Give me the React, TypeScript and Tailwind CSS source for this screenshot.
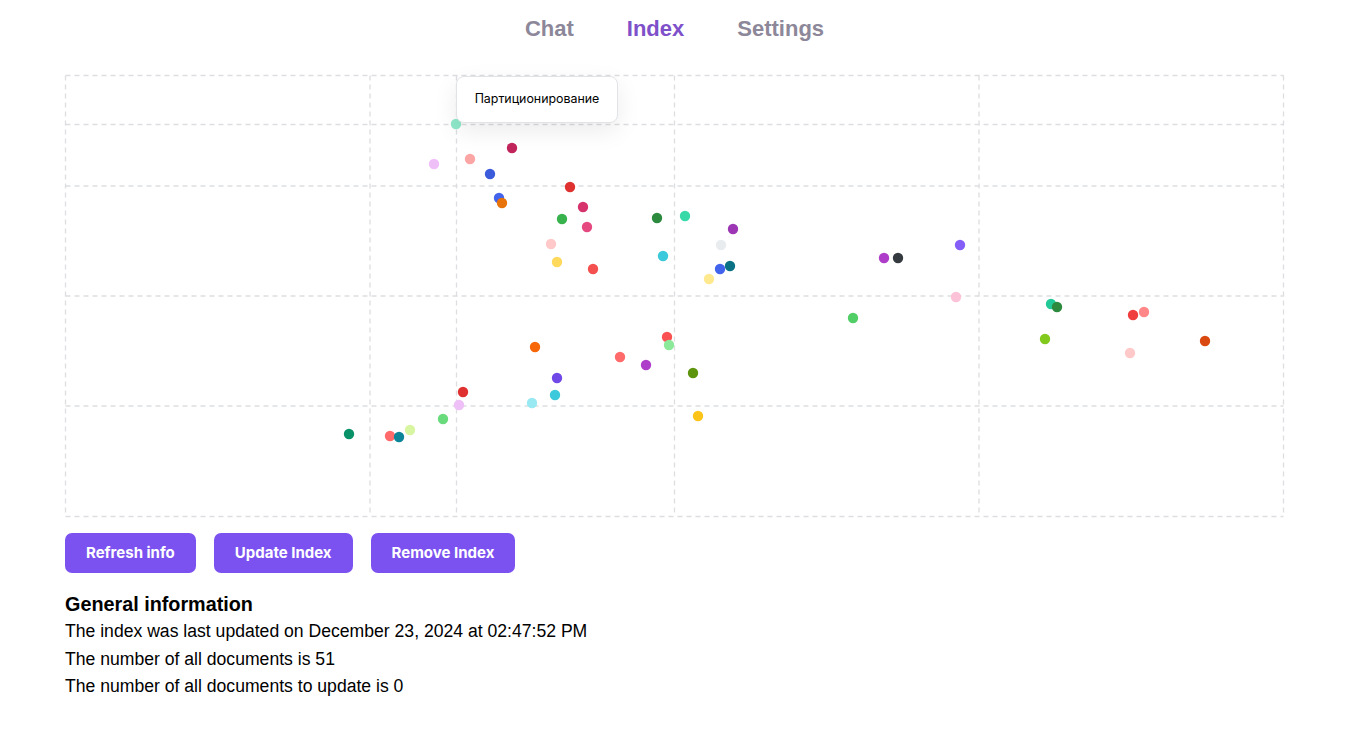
const points: [number, number, string][] = [
  [456, 123, '#8fe8c9'],
  [434, 163, '#efbff7'],
  [470, 158, '#fca5a5'],
  [512, 147, '#c2255c'],
  [490, 173, '#3b5bdb'],
  [499, 197, '#4263eb'],
  [502, 202, '#e8730a'],
  [570, 186, '#e03131'],
  [583, 206, '#d6336c'],
  [562, 218, '#37b24d'],
  [587, 226, '#e64980'],
  [551, 243, '#ffc9c9'],
  [557, 261, '#ffd95c'],
  [593, 268, '#f55050'],
  [657, 217, '#2b8a3e'],
  [685, 215, '#38d9a9'],
  [733, 228, '#9c36b5'],
  [721, 244, '#e9ecef'],
  [663, 255, '#3bc9db'],
  [720, 268, '#4263eb'],
  [730, 265, '#0b7285'],
  [709, 278, '#ffe98f'],
  [884, 257, '#ae3ec9'],
  [898, 257, '#343a40'],
  [960, 244, '#845ef7'],
  [956, 296, '#fcc2d7'],
  [853, 317, '#51cf66'],
  [1051, 303, '#20c997'],
  [1057, 306, '#2b8a3e'],
  [1133, 314, '#f03e3e'],
  [1144, 311, '#ff8787'],
  [1045, 338, '#82c91e'],
  [1130, 352, '#ffc9c9'],
  [1205, 340, '#d9480f'],
  [667, 336, '#fa5252'],
  [669, 344, '#8ce99a'],
  [535, 346, '#f76707'],
  [620, 356, '#ff6b6b'],
  [646, 364, '#ae3ec9'],
  [693, 372, '#5c940d'],
  [557, 377, '#7048e8'],
  [555, 394, '#3bc9db'],
  [532, 402, '#99e9f2'],
  [463, 391, '#e03131'],
  [459, 404, '#efbff7'],
  [443, 418, '#69db7c'],
  [698, 415, '#fcc419'],
  [349, 433, '#099268'],
  [390, 435, '#ff6b6b'],
  [399, 436, '#0c8599'],
  [410, 429, '#d8f5a2'],
];

const vLines = [65.5, 370, 674.5, 979, 1283.5];
const hLines = [74.5, 185, 295, 405, 515.5];

function Scatter() {
  return (
    <div className="relative w-[1221px] h-[444px]">
      <svg width="1221" height="444" viewBox="64 73 1221 444" className="block">
        <g stroke="#dddee1" strokeWidth="1.3" strokeDasharray="5 4" fill="none">
          {vLines.map((x) => (
            <line key={'v' + x} x1={x} x2={x} y1={74.5} y2={515.5} />
          ))}
          {hLines.map((y) => (
            <line key={'h' + y} x1={65.5} x2={1283.5} y1={y} y2={y} />
          ))}
          {/* hover cursor */}
          <line x1={456.5} x2={456.5} y1={74.5} y2={515.5} />
          <line x1={65.5} x2={1283.5} y1={123.5} y2={123.5} />
        </g>
        {points.map(([x, y, c], i) => (
          <circle key={i} cx={x} cy={y} r={5.2} fill={c} />
        ))}
      </svg>
      <div className="absolute left-[392px] top-[2px] w-[162px] h-[47px] bg-white border border-[#e2e3e6] rounded-lg shadow-[0_8px_24px_rgba(0,0,0,0.08)] flex items-center justify-center font-['Inter',sans-serif] text-[12.4px] text-black">
        Партиционирование
      </div>
    </div>
  );
}

export default function App() {
  return (
    <div className="min-h-[733px] bg-white font-['Liberation_Sans',Arial,sans-serif]">
      <nav className="flex justify-center gap-[53px] pt-[15px] pr-[6px] h-[74px] text-[22px] font-bold leading-[28px]">
        <a href="#" className="text-[#8c8799]">Chat</a>
        <a href="#" className="text-[#7e50c9]">Index</a>
        <a href="#" className="text-[#8c8799]">Settings</a>
      </nav>
      <main className="pl-[64px]">
        <Scatter />
        <div className="flex gap-[18px] mt-[15px] pl-[1px] font-['Inter',sans-serif]">
          {['Refresh info', 'Update Index', 'Remove Index'].map((label) => (
            <button
              key={label}
              className="h-[40px] px-[21px] rounded-[7px] bg-[#7b52f0] text-white text-[15px] font-bold"
            >
              {label}
            </button>
          ))}
        </div>
        <section className="mt-[17px] pl-[1px] text-black">
          <h3 className="text-[19.8px] font-bold leading-[28px]">General information</h3>
          <p className="text-[17.6px] leading-[27.5px]">The index was last updated on December 23, 2024 at 02:47:52 PM</p>
          <p className="text-[17.6px] leading-[27.5px]">The number of all documents is 51</p>
          <p className="text-[17.6px] leading-[27.5px]">The number of all documents to update is 0</p>
        </section>
      </main>
    </div>
  );
}
